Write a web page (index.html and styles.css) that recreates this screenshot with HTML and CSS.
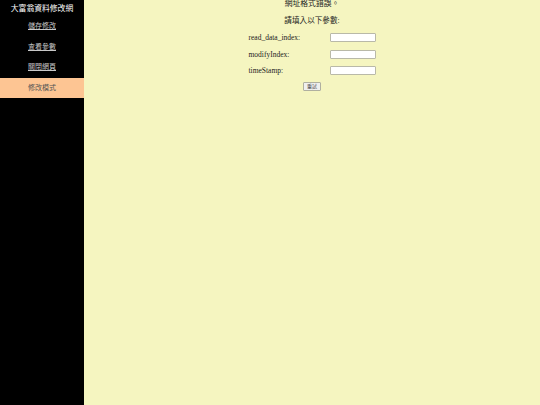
FILE: index.html
```html
<!DOCTYPE html>
<html lang="zh-Hant">
<head>
<meta charset="utf-8">
<title>大富翁資料修改網</title>
<link rel="stylesheet" href="styles.css">
</head>
<body>
<div class="layout">
  <nav class="sidebar">
    <div class="brand">大富翁資料修改網</div>
    <a class="nav-link" href="#">儲存修改</a>
    <a class="nav-link" href="#">查看參數</a>
    <a class="nav-link" href="#">關閉網頁</a>
    <div class="nav-active">修改模式</div>
  </nav>
  <main class="content">
    <p class="error">網址格式錯誤。</p>
    <p class="prompt">請填入以下參數:</p>
    <div class="form">
      <div class="row"><span class="label">read_data_index:</span><input class="field" type="text"></div>
      <div class="row"><span class="label">modifyIndex:</span><input class="field" type="text"></div>
      <div class="row"><span class="label">timeStamp:</span><input class="field" type="text"></div>
    </div>
    <button class="retry" type="button">重試</button>
  </main>
</div>
</body>
</html>
```

FILE: styles.css
```css
html, body {
  margin: 0;
  padding: 0;
  height: 100%;
}
body {
  font-family: "Liberation Serif", "Noto Sans CJK TC", serif;
  background: #f5f5c0;
}
.layout {
  display: flex;
  height: 405px;
}
.sidebar {
  width: 84px;
  flex: none;
  background: #000;
  display: flex;
  flex-direction: column;
  align-items: stretch;
  padding-top: 4px;
}
.brand {
  color: #fff;
  font-size: 7.8px;
  line-height: 10px;
  text-align: center;
  height: 17px;
}
.nav-link {
  color: #c8c8c8;
  font-size: 7px;
  line-height: 10px;
  text-align: center;
  text-decoration: underline;
  height: 20.5px;
}
.nav-active {
  margin-top: -5px;
  background: #fdc593;
  color: #555;
  font-size: 7px;
  height: 20px;
  line-height: 20px;
  text-align: center;
}
.content {
  flex: 1;
  display: flex;
  flex-direction: column;
  align-items: center;
  color: #222;
}
.error {
  margin: 0;
  font-size: 7.8px;
  line-height: 8px;
}
.prompt {
  margin: 8px 0 0;
  font-size: 7.6px;
  line-height: 10px;
}
.form {
  margin-top: 7px;
  display: flex;
  flex-direction: column;
  gap: 7.5px;
}
.row {
  display: flex;
  align-items: center;
  height: 9px;
}
.label {
  width: 81px;
  font-size: 7.5px;
  color: #222;
}
.field {
  box-sizing: border-box;
  width: 46px;
  height: 9px;
  margin: 0;
  padding: 0;
  border: 1px solid #b9b9a8;
  border-radius: 1px;
  background: #fff;
}
.retry {
  margin-top: 7px;
  box-sizing: border-box;
  width: 18px;
  height: 9px;
  padding: 0;
  font-size: 5px;
  line-height: 7px;
  font-family: "Liberation Serif", "Noto Sans CJK TC", serif;
  color: #555;
  background: #efefef;
  border: 1px solid #b0b0a0;
  border-radius: 1px;
}
```
